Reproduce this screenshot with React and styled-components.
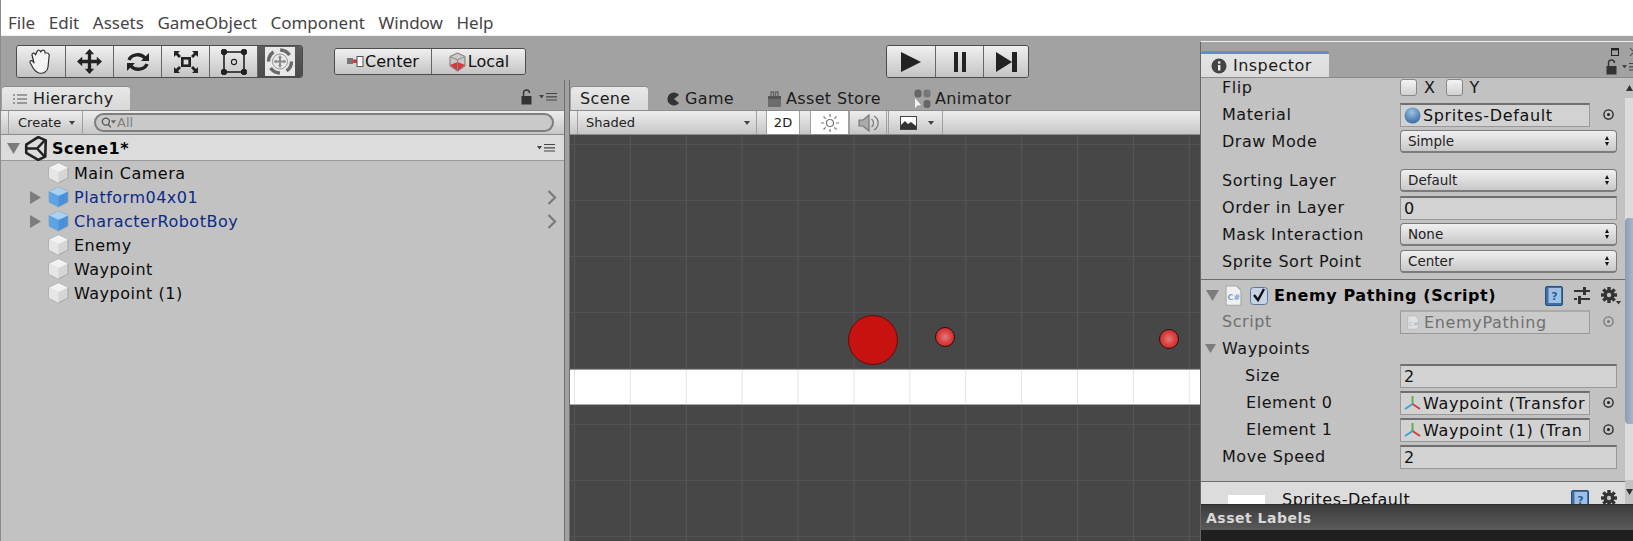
import React from "react";
import styled, { createGlobalStyle, css } from "styled-components";

const Global = createGlobalStyle`
  html, body { margin: 0; padding: 0; background: #a2a2a2; }
  body { font-family: "DejaVu Sans", sans-serif; }
  * { box-sizing: border-box; }
`;
const Page = styled.div`
  width: 1633px; height: 541px; overflow: hidden; display: flex; flex-direction: column;
  background: #a2a2a2; border-left: 1px solid #8c8c8c;
`;
const MenuBar = styled.div`
  height: 36px; flex: none; background: #fff; display: flex; align-items: center; gap: 13.6px;
  padding: 9px 0 0 7px; font: 17px "Noto Sans", sans-serif; color: #444; border-bottom: 1px solid #eee;
`;
const Main = styled.div`flex: 1; display: flex; min-height: 0;`;
const LeftArea = styled.div`width: 1199px; flex: none; display: flex; flex-direction: column;`;
const Toolbar = styled.div`height: 44px; flex: none; display: flex; align-items: flex-start; padding: 9px 0 0 15px;`;
const ButtonGroup = styled.div`
  display: flex; height: ${p => p.$h || 33}px; margin-top: ${p => p.$top || 0}px; margin-left: ${p => p.$left || 0}px;
  border: 1px solid #4c4c4c; border-radius: 3px; overflow: hidden;
`;
const ToolButton = styled.div`
  width: ${p => p.$w || 48}px; display: flex; align-items: center; justify-content: center; gap: 1px;
  font-size: 16px; color: #111; border-left: 1px solid #666;
  &:first-child { border-left: 0; }
  background: ${p => p.$on ? "linear-gradient(#5c5c5c,#4b4b4b)" : "linear-gradient(#f0f0f0,#c4c4c4)"};
`;
const Panels = styled.div`flex: 1; display: flex; min-height: 0;`;
const Hierarchy = styled.section`width: 563px; flex: none; display: flex; flex-direction: column; background: #c2c2c2;`;
const Splitter = styled.div`width: 6px; flex: none; background: #a2a2a2; border-left: 1px solid #6e6e6e; border-right: 1px solid #6e6e6e;`;
const ScenePanel = styled.section`flex: 1; min-width: 0; display: flex; flex-direction: column;`;
const TabBar = styled.div`
  height: 30px; flex: none; background: #a2a2a2; display: flex; align-items: flex-end; position: relative;
  padding-left: ${p => p.$pad || 0}px;
`;
const Tab = styled.div`
  height: 23px; display: flex; align-items: center; gap: ${p => p.$gap || 5}px; width: ${p => p.$w}px; padding-left: ${p => p.$pl || 9}px;
  margin-right: ${p => p.$mr || 0}px; font-size: 16px; letter-spacing: .35px; color: #1c1c1c;
  ${p => p.$active && css`background: linear-gradient(#e8e8e8,#d8d8d8); border-radius: 3px 3px 0 0; box-shadow: 0 -1px 0 #8a8a8a;`}
`;
const TabActions = styled.div`margin-left: auto; display: flex; align-items: center; gap: 7px; padding: 0 6px 5px 0;`;
const PanelBar = styled.div`
  height: 25px; flex: none; display: flex; align-items: stretch; background: linear-gradient(#ededed,#c6c6c6);
  border-top: 1px solid #8c8c8c; border-bottom: 1px solid #8c8c8c;
`;
const BarButton = styled.div`
  width: ${p => p.$w}px; margin-left: ${p => p.$left || 0}px; display: flex; align-items: center; padding-left: ${p => p.$pl || 0}px;
  font-size: 13px; color: #222; border-left: 1px solid #a0a0a0; border-right: 1px solid #a0a0a0;
  justify-content: ${p => p.$center ? "center" : "flex-start"};
  background: ${p => p.$on ? "#fff" : "transparent"};
`;
const Caret = styled.span`
  width: 0; height: 0; border-left: 3px solid transparent; border-right: 3px solid transparent; border-top: 4px solid #444;
  margin-left: ${p => p.$ml || "auto"}; margin-right: ${p => p.$mr || 0}px;
`;
const Search = styled.div`
  width: 460px; height: 19px; margin: 2px 0 0 11px; border: 2px solid #7e7e7e; border-radius: 10px; background: #c9c9c9;
  display: flex; align-items: center; padding-left: 5px; font-size: 13px; color: #808080;
`;
const SceneRow = styled.div`
  height: 26px; flex: none; background: #dcdcdc; border-bottom: 1px solid #999; display: flex; align-items: center; padding: 1px 8px 0 6px;
  gap: 4px; font-size: 16px; letter-spacing: .5px; font-weight: 700; color: #000;
`;
const TreeRow = styled.div`
  height: 24px; flex: none; display: flex; align-items: center; padding: 0 7px 0 28px; font-size: 16px; letter-spacing: .5px;
  color: ${p => p.$prefab ? "#0c2a87" : "#0a0a0a"};
`;
const ArrowSlot = styled.span`width: ${p => p.$w || 19}px; flex: none; display: flex;`;
const RowLabel = styled.span`margin-left: 5px;`;
const RowEnd = styled.span`margin-left: auto; display: flex;`;
const SceneView = styled.div`
  flex: 1; position: relative; overflow: hidden; background-color: #474747;
  background-image:
    linear-gradient(90deg, #565656 1px, transparent 1px),
    linear-gradient(#525252 1px, transparent 1px);
  background-size: 55.9px 56px;
  background-position: 4px 9px;
`;
const Platform = styled.div`
  position: absolute; left: 0; right: 0; top: 234px; height: 36px; background-color: #fff;
  border-top: 1px solid #999; border-bottom: 1px solid #aaa;
  background-image: linear-gradient(90deg, #e4e4e4 1px, transparent 1px);
  background-size: 55.9px 100%; background-position: 4px 0;
`;
const Enemy = styled.div`
  position: absolute; left: 278px; top: 180px; width: 50px; height: 50px; border-radius: 50%;
  background: #c81212; border: 1.5px solid #5a0f0f;
`;
const Waypoint = styled.div`
  position: absolute; left: ${p => p.$x}px; top: ${p => p.$y}px; width: 20px; height: 20px; border-radius: 50%;
  background: radial-gradient(circle at 50% 50%, #e07a7a 0, #d83a3a 55%, #c11c1c 100%); border: 1.5px solid #2f0d0d;
`;
const Inspector = styled.aside`
  flex: 1; min-width: 0; padding-top: 5px; display: flex; flex-direction: column; background: #a2a2a2;
`;
const InspectorFrame = styled.div`
  flex: 1; min-height: 0; display: flex; flex-direction: column; border-top: 1px solid #f0f0f0; border-left: 1px solid #666; position: relative;
`;
const InspectorTabs = styled.div`
  height: 36px; flex: none; display: flex; align-items: flex-end; background: #a2a2a2; border-bottom: 1px solid #8c8c8c;
`;
const InspectorTab = styled.div`
  width: 128px; height: 26px; background: linear-gradient(#e4e4e4,#dcdcdc); border-top: 3px solid #5c8ed0; border-radius: 3px 3px 0 0;
  display: flex; align-items: center; gap: 6px; padding-left: 10px; font-size: 16px; letter-spacing: .45px; color: #1a1a1a;
`;
const WindowIcons = styled.div`
  margin-left: auto; width: 30px; height: 100%; display: flex; flex-direction: column; align-items: flex-start; padding: 6px 0 0 3px; gap: 3px; overflow: hidden;
`;
const IconLine = styled.div`display: flex; align-items: center; gap: ${p => p.$gap || 5}px; padding-left: ${p => p.$pl || 0}px;`;
const InspectorBody = styled.div`flex: 1; min-height: 0; display: flex; overflow: hidden; background: #c2c2c2;`;
const Props = styled.div`flex: 1; min-width: 0; display: flex; flex-direction: column; margin-top: -4px;`;
const Scrollbar = styled.div`
  width: 8px; flex: none; display: flex; flex-direction: column; align-items: center; background: #dcdcdc;
`;
const ScrollEnd = styled.div`
  height: ${p => p.$h}px; flex: none; background: #c2c2c2; width: 100%; display: flex; align-items: center; justify-content: center;
`;
const ScrollThumb = styled.div`height: 206px; width: 100%; flex: none; margin-top: 120px; background: linear-gradient(90deg,#8d9db5,#a9b6c8); border-radius: 4px 0 0 4px;`;
const ScrollSpace = styled.div`flex: 1;`;
const PropRow = styled.div`
  height: 27px; flex: none; display: flex; align-items: center; padding-left: ${p => p.$indent || 21}px; font-size: 16px; letter-spacing: .55px; color: ${p => p.$dim ? "#707070" : "#151515"};
  margin-top: ${p => p.$mt || 0}px;
`;
const PropLabel = styled.div`width: ${p => p.$w || 178}px; flex: none; white-space: nowrap;`;
const Popup = styled.div`
  width: 217px; height: 23px; border: 1px solid #7b7b7b; border-radius: 4px; background: linear-gradient(#f0f0f0,#c8c8c8); border-bottom-width: 2px;
  display: flex; align-items: center; padding: 0 7px; font-size: 13.5px; letter-spacing: 0; color: #222;
`;
const UpDown = styled.span`margin-left: auto; display: flex; flex-direction: column; gap: 2px;`;
const UpTri = styled.i`display: block; width: 0; height: 0; border-left: 2.5px solid transparent; border-right: 2.5px solid transparent; border-bottom: 4px solid #111;`;
const DownTri = styled(UpTri)`border-bottom: 0; border-top: 4px solid #111;`;
const Field = styled.div`
  width: ${p => p.$w || 217}px; height: 24px; background: ${p => p.$dim ? "#cacaca" : "#d2d2d2"}; display: flex; align-items: center; gap: ${p => p.$gap || 2}px; padding-left: ${p => p.$pl || 3}px;
  border: 1px solid #999; border-top: 2px solid ${p => p.$dim ? "#aaa" : "#6f6f6f"}; font-size: 16px; letter-spacing: .65px; white-space: nowrap; overflow: hidden;
  color: ${p => p.$dim ? "#707070" : "#111"};
`;
const Target = styled.span`margin-left: 13px; display: flex;`;
const Check = styled.span`
  width: 17px; height: 17px; border: 1px solid #888; border-radius: 3px; background: linear-gradient(#f4f4f4,#d0d0d0); display: inline-block; margin-right: 7px;
`;
const XY = styled.span`margin-right: 10px;`;
const Divider = styled.div`height: 1px; background: #6e6e6e; margin-top: 4px; flex: none;`;
const CompHeader = styled.div`
  height: 27px; flex: none; display: flex; align-items: center; padding: 2px 0 0 5px; font-weight: 700; font-size: 16px; color: #000; margin-top: 1px;
`;
const HeaderTitle = styled.span`margin-left: 6px; letter-spacing: .6px;`;
const HeaderIcons = styled.span`margin-left: auto; display: flex; align-items: center; gap: 11px; padding-right: 4px;`;
const HeaderGap = styled.span`width: ${p => p.$w}px; flex: none;`;
const BottomHeader = styled.div`
  height: 24px; flex: none; margin-top: 11px; background: #dcdcdc; border-top: 1px solid #6e6e6e; display: flex; align-items: flex-start; padding-left: 27px;
  font-size: 16px; letter-spacing: .55px; color: #111; overflow: hidden;
`;
const Swatch = styled.div`width: 37px; height: 12px; background: #fff; margin: 13px 17px 0 0;`;
const BottomTitle = styled.span`margin-top: 8px;`;
const BottomIcons = styled.span`margin-left: auto; display: flex; gap: 12px; padding: 8px 4px 0 0;`;
const AssetBar = styled.div`
  height: 26px; flex: none; background: linear-gradient(#3d3d3d,#5a5a5a); border-top: 1px solid #2c2c2c; display: flex; align-items: center; padding-left: 5px;
  font-size: 14px; letter-spacing: .5px; font-weight: 700; color: #d8d8d8;
`;
const BlackBar = styled.div`height: 11px; flex: none; background: #1f1f1f;`;

const Cube = ({ blue }) => (
  <svg width="21" height="22" viewBox="0 0 21 22">
    <path d="M10.5 1 L20 5.5 V16 L10.5 21 L1 16 V5.5 Z" fill={blue ? "#4a90d8" : "#d6d6d6"} stroke="#9a9a9a" strokeWidth=".8" />
    <path d="M1 5.5 L10.5 10 L20 5.5 L10.5 1 Z" fill={blue ? "#a9d2f2" : "#f2f2f2"} />
    <path d="M10.5 10 V21 L1 16 V5.5 Z" fill={blue ? "#5ea4e4" : "#e6e6e6"} />
  </svg>
);
const Tri = ({ down, color = "#7c7c7c", s = 13 }) => (
  <svg width={s} height={s} viewBox="0 0 12 12"><path d={down ? "M0 1 H12 L6 11 Z" : "M1 0 V12 L11 6 Z"} fill={color} /></svg>
);
const ScrollTri = ({ up }) => (
  <svg width="7" height="6" viewBox="0 0 7 6"><path d={up ? "M0 6 L3.5 0 L7 6 Z" : "M0 0 L3.5 6 L7 0 Z"} fill="#333" /></svg>
);
const ListMenu = () => (
  <svg width="19" height="10" viewBox="0 0 19 10"><path d="M0 3 H5 L2.5 6.5 Z" fill="#444" /><path d="M7 1.5 H18 M7 4.8 H18 M7 8 H18" stroke="#444" strokeWidth="1.2" /></svg>
);
const Lock = () => (
  <svg width="11" height="16" viewBox="0 0 11 16"><path d="M2.5 7 V4 a3 3 0 0 1 6 0" fill="none" stroke="#333" strokeWidth="1.4" /><rect x="0.5" y="7" width="10" height="8.5" fill="#333" /></svg>
);
const Unity = () => (
  <svg width="24" height="25" viewBox="0 0 22 23">
    <path d="M13 1 L20 4 L19.5 19 L13 22 L2 15.5 V8 Z" fill="none" stroke="#222" strokeWidth="2.4" strokeLinejoin="round" />
    <path d="M2.5 11.5 H12 L19 4 M12 11.5 L19 19" fill="none" stroke="#222" strokeWidth="2.2" />
  </svg>
);
const Hand = () => (
  <svg width="26" height="28" viewBox="0 0 26 28" fill="#f4f4f4" stroke="#333" strokeWidth="1.2" strokeLinejoin="round">
    <path d="M6 15 L4 7 C4 4.5 7 4.5 7.5 7 L9 3.5 C10 1.5 12.5 2 12.5 4 L14 2.5 C15.5 1.5 17.5 2.5 17 5 L19 5 C21 5 21.5 7 21 9 L20 19 C19.5 24 15 26 11 25 C8 24 6 22 4.5 19 L2 14.5 C1.5 12.5 4.5 11.5 6 15 Z" />
  </svg>
);
const MoveIcon = () => (
  <svg width="25" height="25" viewBox="0 0 24 24" fill="#222">
    <path d="M12 0 L16.5 5 H13.6 V10.4 H19 V7.5 L24 12 L19 16.5 V13.6 H13.6 V19 H16.5 L12 24 L7.5 19 H10.4 V13.6 H5 V16.5 L0 12 L5 7.5 V10.4 H10.4 V5 H7.5 Z" />
  </svg>
);
const RotateIcon = () => (
  <svg width="24" height="22" viewBox="0 0 24 22" fill="none" stroke="#222" strokeWidth="3.4">
    <path d="M3 9 A9 7.5 0 0 1 19 7" />
    <path d="M21 13 A9 7.5 0 0 1 5 15" />
    <path d="M23 2 V10 H15 Z M1 20 V12 H9 Z" fill="#222" stroke="none" />
  </svg>
);
const ScaleIcon = () => (
  <svg width="26" height="24" viewBox="0 0 26 24" fill="#222">
    <rect x="8" y="7" width="10" height="10" /><rect x="10.6" y="9.6" width="4.8" height="4.8" fill="#ddd" />
    <path d="M1 1 H7 L5 3 L8 6 L6 8 L3 5 L1 7 Z M25 1 H19 L21 3 L18 6 L20 8 L23 5 L25 7 Z M1 23 H7 L5 21 L8 18 L6 16 L3 19 L1 17 Z M25 23 H19 L21 21 L18 18 L20 16 L23 19 L25 17 Z" />
  </svg>
);
const RectIcon = () => (
  <svg width="26" height="26" viewBox="0 0 26 26" fill="none" stroke="#222">
    <rect x="3" y="3" width="20" height="20" strokeWidth="1.6" />
    <circle cx="13" cy="13" r="2.6" strokeWidth="1.1" />
    {[[3, 3], [23, 3], [3, 23], [23, 23]].map(([x, y]) => <circle key={x + "-" + y} cx={x} cy={y} r="2.8" fill="#222" />)}
  </svg>
);
const TransformIcon = () => (
  <svg width="30" height="29" viewBox="0 0 30 29">
    <rect width="30" height="29" fill="#e8e8e8" />
    <g fill="none" stroke="#6a6a6a" strokeWidth="3.4"><circle cx="15" cy="14.5" r="11.5" strokeDasharray="11 7" /></g>
    <circle cx="15" cy="14.5" r="7.5" fill="none" stroke="#999" strokeWidth="1" />
    <path d="M15 8 L17 11 H16 V13.5 H18.5 V12.5 L21.5 14.5 L18.5 16.5 V15.5 H16 V18 H17 L15 21 L13 18 H14 V15.5 H11.5 V16.5 L8.5 14.5 L11.5 12.5 V13.5 H14 V11 H13 Z" fill="#8a8a8a" />
  </svg>
);
const CenterIcon = () => (
  <svg width="17" height="11" viewBox="0 0 17 11"><rect x="0" y="2" width="6" height="6" fill="#777" /><rect x="6" y="3.5" width="4" height="3.5" fill="#d33" /><rect x="10" y="0.5" width="6" height="10" fill="#fff" stroke="#555" /></svg>
);
const LocalIcon = () => (
  <svg width="19" height="20" viewBox="0 0 19 20">
    <path d="M9.5 1 L17 4.5 V14 L9.5 19 L2 14 V4.5 Z" fill="#c9c9c9" stroke="#777" />
    <path d="M2 13 L9.5 10 L17 13 L9.5 19 Z" fill="#d43a3a" />
    <path d="M9.5 8 V19" stroke="#888" /><path d="M2 4.5 L9.5 8 L17 4.5" fill="none" stroke="#888" />
  </svg>
);
const PlayIcon = () => <svg width="22" height="20" viewBox="0 0 22 20"><path d="M1 0 L21 10 L1 20 Z" fill="#222" /></svg>;
const PauseIcon = () => <svg width="16" height="20" viewBox="0 0 16 20"><path d="M2 0 H6 V20 H2 Z M10 0 H14 V20 H10 Z" fill="#222" /></svg>;
const StepIcon = () => <svg width="23" height="20" viewBox="0 0 23 20"><path d="M1 0 L17 10 L1 20 Z M17 0 H22 V20 H17 Z" fill="#222" /></svg>;
const ListSmall = () => (
  <svg width="16" height="12" viewBox="0 0 16 12"><path d="M1 2 H3 M5 2 H15 M1 6 H3 M5 6 H15 M1 10 H3 M5 10 H15" stroke="#555" strokeWidth="1.2" /></svg>
);
const SearchIcon = () => (
  <svg width="16" height="13" viewBox="0 0 18 13"><circle cx="5.5" cy="5.5" r="4" fill="none" stroke="#555" strokeWidth="1.5" /><path d="M8 8.5 L11 12" stroke="#555" strokeWidth="1.5" /><path d="M11 4 H17 L14 8 Z" fill="#666" /></svg>
);
const Pacman = () => <svg width="14" height="14" viewBox="0 0 14 14"><path d="M13 3 A6.5 6.5 0 1 0 13 11 L8 7 Z" fill="#333" /></svg>;
const StoreIcon = () => (
  <svg width="17" height="18" viewBox="0 0 17 18"><rect x="2" y="6" width="13" height="11" fill="#6d6d6d" /><rect x="2" y="6" width="13" height="3" fill="#555" /><path d="M5 6 V2 H7.5 V6 M9.5 6 V2 H12 V6" fill="none" stroke="#666" strokeWidth="1.4" /></svg>
);
const AnimatorIcon = () => (
  <svg width="17" height="20" viewBox="0 0 17 20">
    <rect x="0.5" y="0.5" width="7" height="8" rx="3" fill="#666" /><rect x="9.5" y="0.5" width="7" height="8" rx="3" fill="#777" />
    <rect x="9.5" y="11" width="7" height="8" rx="3" fill="#666" /><path d="M1 9 L1 19 L3.5 16.5 L7 16 Z" fill="#f4f4f4" />
  </svg>
);
const Sun = () => (
  <svg width="18" height="18" viewBox="0 0 18 18" stroke="#777" strokeWidth="1.2" fill="none">
    <circle cx="9" cy="9" r="3.5" /><path d="M9 0 V3 M9 15 V18 M0 9 H3 M15 9 H18 M2.5 2.5 L4.7 4.7 M13.3 13.3 L15.5 15.5 M2.5 15.5 L4.7 13.3 M13.3 4.7 L15.5 2.5" />
  </svg>
);
const Sound = () => (
  <svg width="21" height="20" viewBox="0 0 21 20" fill="none" stroke="#777" strokeWidth="1.2">
    <path d="M1 7 H5 L11 2 V18 L5 13 H1 Z" fill="#aaa" /><path d="M13.5 6 A5 5 0 0 1 13.5 14 M16 3 A8 8 0 0 1 16 17" />
  </svg>
);
const ImageIcon = () => (
  <svg width="17" height="14" viewBox="0 0 17 14"><rect x="0.5" y="0.5" width="16" height="13" fill="#fff" stroke="#444" /><path d="M1 13 V9 L5 5 L8 8 L11 6 L16 10 V13 Z" fill="#333" /></svg>
);
const Chevron = () => (
  <svg width="10" height="15" viewBox="0 0 10 15"><path d="M1.5 1 L8 7.5 L1.5 14" fill="none" stroke="#7a7a7a" strokeWidth="2.2" /></svg>
);
const InfoIcon = () => (
  <svg width="16" height="16" viewBox="0 0 16 16"><circle cx="8" cy="8" r="7.5" fill="#444" /><rect x="7" y="7" width="2.4" height="5.5" fill="#eee" /><rect x="7" y="3.4" width="2.4" height="2.2" fill="#eee" /></svg>
);
const Ball = () => (
  <svg width="17" height="17" viewBox="0 0 17 17">
    <defs><radialGradient id="ballg" cx=".45" cy=".3" r=".8"><stop offset="0" stopColor="#9cc4e8" /><stop offset="1" stopColor="#2c5f96" /></radialGradient></defs>
    <circle cx="8.5" cy="8.5" r="8" fill="url(#ballg)" />
  </svg>
);
const TargetIcon = ({ dim }) => (
  <svg width="11" height="11" viewBox="0 0 11 11"><circle cx="5.5" cy="5.5" r="4.6" fill="none" stroke={dim ? "#777" : "#222"} strokeWidth="1.3" /><circle cx="5.5" cy="5.5" r="1.5" fill={dim ? "#777" : "#222"} /></svg>
);
const ScriptIcon = ({ s = 17, dim }) => (
  <svg width={s} height={s * 1.25} viewBox="0 0 16 20" opacity={dim ? 0.6 : 1}>
    <path d="M1 1 H11 L15 5 V19 H1 Z" fill="#f0f0f0" stroke="#a8a8a8" />
    <text x="2.4" y="14" fontSize="7.5" fontFamily="DejaVu Sans" fill="#7d9fd2">C#</text>
  </svg>
);
const CheckBox = () => (
  <svg width="18" height="18" viewBox="0 0 18 18">
    <rect x=".5" y=".5" width="17" height="17" rx="3" fill="#c6d4e8" stroke="#5f7895" />
    <path d="M4 8 L8 13 L14 2" fill="none" stroke="#111" strokeWidth="2.4" />
  </svg>
);
const HelpBook = () => (
  <svg width="18" height="20" viewBox="0 0 18 20">
    <rect x="0.5" y="0.5" width="17" height="19" rx="1.5" fill="#3f6ea6" stroke="#2a4f7e" />
    <rect x="3.5" y="2" width="12.5" height="15" fill="#9fc0e2" />
    <text x="6.2" y="14" fontSize="11" fontFamily="DejaVu Sans" fontWeight="700" fill="#2a5f99">?</text>
  </svg>
);
const Sliders = () => (
  <svg width="16" height="17" viewBox="0 0 16 17" fill="#333"><path d="M0 3 H9 V5 H0 Z M12 3 H16 V5 H12 Z M9 0 H12 V8 H9 Z M0 11 H3 V13 H0 Z M7 11 H16 V13 H7 Z M4 9 H7 V17 H4 Z" /></svg>
);
const Gear = () => (
  <svg width="20" height="18" viewBox="0 0 20 18">
    <g transform="translate(8 8)">
      {[0, 45, 90, 135].map(a => <rect key={a} x="-1.7" y="-8" width="3.4" height="16" fill="#333" transform={`rotate(${a})`} />)}
      <circle r="5.4" fill="#333" /><circle r="2.2" fill="#c2c2c2" />
    </g>
    <path d="M15 14 H20 L17.5 17.5 Z" fill="#333" />
  </svg>
);
const Axes = () => (
  <svg width="17" height="17" viewBox="0 0 17 17" fill="none" strokeWidth="2">
    <path d="M8.5 9 V1" stroke="#5fb246" /><path d="M8.5 9 L16 14" stroke="#d83a3a" /><path d="M8.5 9 L1 14" stroke="#3aa0dc" />
  </svg>
);
const MaxIcon = () => <svg width="8" height="8" viewBox="0 0 8 8"><rect x=".5" y=".5" width="7" height="7" fill="none" stroke="#222" strokeWidth="1" /><rect x="0" y="0" width="8" height="2.4" fill="#222" /></svg>;
const CloseIcon = () => <svg width="10" height="8" viewBox="0 0 10 8"><path d="M1 0 L9 8 M9 0 L1 8" stroke="#555" strokeWidth="1.2" /></svg>;
const Updown = () => <UpDown><UpTri /><DownTri /></UpDown>;

const tree = [
  { name: "Main Camera" },
  { name: "Platform04x01", prefab: true },
  { name: "CharacterRobotBoy", prefab: true },
  { name: "Enemy" },
  { name: "Waypoint" },
  { name: "Waypoint (1)" },
];

export default function App() {
  return (
    <Page>
      <Global />
      <MenuBar>
        {["File", "Edit", "Assets", "GameObject", "Component", "Window", "Help"].map(m => <span key={m}>{m}</span>)}
      </MenuBar>
      <Main>
        <LeftArea>
          <Toolbar>
            <ButtonGroup>
              <ToolButton><Hand /></ToolButton>
              <ToolButton><MoveIcon /></ToolButton>
              <ToolButton><RotateIcon /></ToolButton>
              <ToolButton><ScaleIcon /></ToolButton>
              <ToolButton><RectIcon /></ToolButton>
              <ToolButton $on $w={45}><TransformIcon /></ToolButton>
            </ButtonGroup>
            <ButtonGroup $h={27} $top={3} $left={31}>
              <ToolButton $w={96}><CenterIcon />Center</ToolButton>
              <ToolButton $w={94}><LocalIcon />Local</ToolButton>
            </ButtonGroup>
            <ButtonGroup $left={360}>
              <ToolButton><PlayIcon /></ToolButton>
              <ToolButton><PauseIcon /></ToolButton>
              <ToolButton $w={45}><StepIcon /></ToolButton>
            </ButtonGroup>
          </Toolbar>
          <Panels>
            <Hierarchy>
              <TabBar $pad={1}>
                <Tab $active $w={128} $pl={10}><ListSmall />Hierarchy</Tab>
                <TabActions><Lock /><ListMenu /></TabActions>
              </TabBar>
              <PanelBar>
                <BarButton $w={75} $left={7} $pl={9}>Create<Caret $mr={7} /></BarButton>
                <Search><SearchIcon />All</Search>
              </PanelBar>
              <SceneRow>
                <Tri down />
                <Unity />
                Scene1*
                <RowEnd><ListMenu /></RowEnd>
              </SceneRow>
              {tree.map(t => (
                <TreeRow key={t.name} $prefab={t.prefab}>
                  <ArrowSlot>{t.prefab && <Tri />}</ArrowSlot>
                  <Cube blue={t.prefab} />
                  <RowLabel>{t.name}</RowLabel>
                  {t.prefab && <RowEnd><Chevron /></RowEnd>}
                </TreeRow>
              ))}
            </Hierarchy>
            <Splitter />
            <ScenePanel>
              <TabBar $pad={1}>
                <Tab $active $w={77} $pl={9} $mr={17}>Scene</Tab>
                <Tab $w={100} $pl={1}><Pacman />Game</Tab>
                <Tab $w={148} $pl={1} $gap={3}><StoreIcon />Asset Store</Tab>
                <Tab $w={110} $pl={1} $gap={4}><AnimatorIcon />Animator</Tab>
              </TabBar>
              <PanelBar>
                <BarButton $w={180} $left={7} $pl={8}>Shaded<Caret $mr={6} /></BarButton>
                <BarButton $w={34} $left={9} $on $center>2D</BarButton>
                <BarButton $w={39} $left={10} $on $center><Sun /></BarButton>
                <BarButton $w={38} $center><Sound /></BarButton>
                <BarButton $w={55} $left={1} $pl={11}><ImageIcon /><Caret $ml="11px" /></BarButton>
              </PanelBar>
              <SceneView>
                <Platform />
                <Enemy />
                <Waypoint $x={365} $y={192} />
                <Waypoint $x={589} $y={194} />
              </SceneView>
            </ScenePanel>
          </Panels>
        </LeftArea>
        <Inspector>
          <InspectorFrame>
            <InspectorTabs>
              <InspectorTab><InfoIcon />Inspector</InspectorTab>
              <WindowIcons>
                <IconLine $pl={5} $gap={10}><MaxIcon /><CloseIcon /></IconLine>
                <IconLine><Lock /><ListMenu /></IconLine>
              </WindowIcons>
            </InspectorTabs>
            <InspectorBody>
              <Props>
                <PropRow><PropLabel>Flip</PropLabel><Check /><XY>X</XY><Check /><XY>Y</XY></PropRow>
                <PropRow><PropLabel>Material</PropLabel><Field $w={190}><Ball />Sprites-Default</Field><Target><TargetIcon /></Target></PropRow>
                <PropRow><PropLabel>Draw Mode</PropLabel><Popup>Simple<Updown /></Popup></PropRow>
                <PropRow $mt={12}><PropLabel>Sorting Layer</PropLabel><Popup>Default<Updown /></Popup></PropRow>
                <PropRow><PropLabel>Order in Layer</PropLabel><Field>0</Field></PropRow>
                <PropRow><PropLabel>Mask Interaction</PropLabel><Popup>None<Updown /></Popup></PropRow>
                <PropRow><PropLabel>Sprite Sort Point</PropLabel><Popup>Center<Updown /></Popup></PropRow>
                <Divider />
                <CompHeader>
                  <Tri down />
                  <HeaderGap $w={6} />
                  <ScriptIcon />
                  <HeaderGap $w={8} />
                  <CheckBox />
                  <HeaderTitle>Enemy Pathing (Script)</HeaderTitle>
                  <HeaderIcons><HelpBook /><Sliders /><Gear /></HeaderIcons>
                </CompHeader>
                <PropRow $dim><PropLabel>Script</PropLabel><Field $w={190} $dim $pl={6} $gap={5}><ScriptIcon s={12} dim />EnemyPathing</Field><Target><TargetIcon dim /></Target></PropRow>
                <PropRow $indent={4}><ArrowSlot $w={17}><Tri down s={11} /></ArrowSlot>Waypoints</PropRow>
                <PropRow $indent={44}><PropLabel $w={155}>Size</PropLabel><Field>2</Field></PropRow>
                <PropRow $indent={45}><PropLabel $w={154}>Element 0</PropLabel><Field $w={190}><Axes />Waypoint (Transfor</Field><Target><TargetIcon /></Target></PropRow>
                <PropRow $indent={45}><PropLabel $w={154}>Element 1</PropLabel><Field $w={190}><Axes />Waypoint (1) (Tran</Field><Target><TargetIcon /></Target></PropRow>
                <PropRow><PropLabel>Move Speed</PropLabel><Field>2</Field></PropRow>
                <BottomHeader>
                  <Swatch />
                  <BottomTitle>Sprites-Default</BottomTitle>
                  <BottomIcons><HelpBook /><Gear /></BottomIcons>
                </BottomHeader>
              </Props>
              <Scrollbar>
                <ScrollEnd $h={20}><ScrollTri up /></ScrollEnd>
                <ScrollThumb />
                <ScrollSpace />
                <ScrollEnd $h={24}><ScrollTri /></ScrollEnd>
              </Scrollbar>
            </InspectorBody>
            <AssetBar>Asset Labels</AssetBar>
            <BlackBar />
          </InspectorFrame>
        </Inspector>
      </Main>
    </Page>
  );
}
